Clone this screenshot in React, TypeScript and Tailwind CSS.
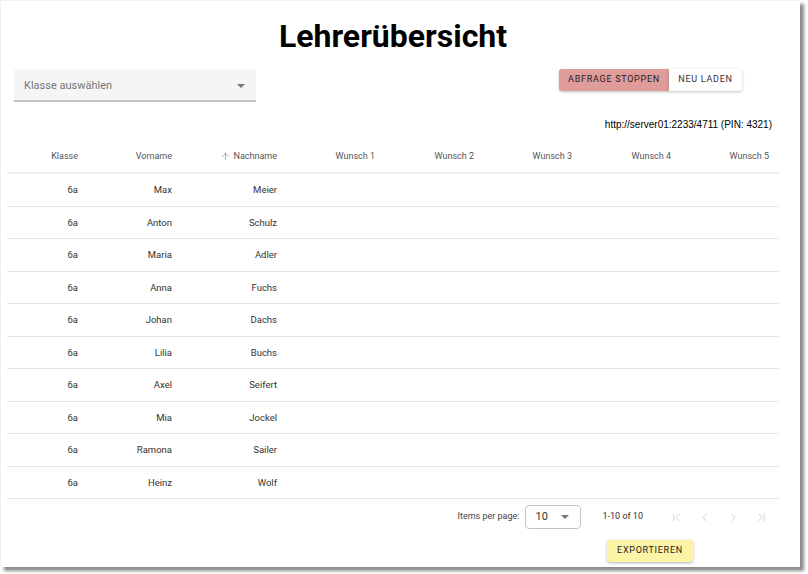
import { ArrowUp, ChevronFirst, ChevronLeft, ChevronRight, ChevronLast } from "lucide-react";

const students = [
  { klasse: "6a", vorname: "Max", nachname: "Meier" },
  { klasse: "6a", vorname: "Anton", nachname: "Schulz" },
  { klasse: "6a", vorname: "Maria", nachname: "Adler" },
  { klasse: "6a", vorname: "Anna", nachname: "Fuchs" },
  { klasse: "6a", vorname: "Johan", nachname: "Dachs" },
  { klasse: "6a", vorname: "Lilia", nachname: "Buchs" },
  { klasse: "6a", vorname: "Axel", nachname: "Seifert" },
  { klasse: "6a", vorname: "Mia", nachname: "Jockel" },
  { klasse: "6a", vorname: "Ramona", nachname: "Sailer" },
  { klasse: "6a", vorname: "Heinz", nachname: "Wolf" },
];

const cols = "grid grid-cols-[81px_94px_105px_98px_99px_98px_99px_98px]";

function Caret() {
  return (
    <svg width="8" height="4" viewBox="0 0 8 4" className="fill-[#757575]">
      <path d="M0 0h8L4 4z" />
    </svg>
  );
}

export default function App() {
  return (
    <div className="w-[808px] h-[574px] bg-white font-['Roboto',sans-serif]">
      <div className="w-[800px] h-[567px] bg-white shadow-[4px_4px_3px_rgba(0,0,0,0.45)] border-t border-l border-[#f0f0f0] flex flex-col">
        <h1 className="pt-[13px] pr-[15px] text-center text-[32px] leading-[44px] font-bold text-black">Lehrerübersicht</h1>

        <div className="mt-[11px] flex items-start">
          <div className="ml-[13px] w-[242px] h-[33px] bg-[#f5f5f5] rounded-t-[3px] border-b-2 border-[#c4c4c4] flex items-center justify-between pl-[10px] pr-[11px] pt-[3px]">
            <span className="text-[11px] text-[#757575]">Klasse auswählen</span>
            <Caret />
          </div>
          <div className="ml-auto mr-[58px] flex">
            <button className="h-[22px] w-[110px] rounded-l-[3px] bg-[#e09b9b] text-[9px] font-normal tracking-[0.08em] text-[#2a1c1c] shadow-[0_1px_3px_rgba(0,0,0,0.25)]">
              ABFRAGE STOPPEN
            </button>
            <button className="h-[22px] w-[73px] rounded-r-[3px] bg-white text-[9px] font-normal tracking-[0.08em] text-[#333] shadow-[0_1px_3px_rgba(0,0,0,0.25)]">
              NEU LADEN
            </button>
          </div>
        </div>

        <div className="mt-[15px] pr-[28px] text-right text-[10px] leading-[16px] text-black font-['Liberation_Sans',sans-serif]">
          http://server01:2233/4711 (PIN: 4321)
        </div>

        <div className="mx-[6px] mt-[8px] w-[772px]">
          <div className={`${cols} h-[33px] border-b-2 border-[#efefef] text-[9px] text-[#555] items-center`}>
            <div className="text-right pr-[10px]">Klasse</div>
            <div className="text-right pr-[10px]">Vorname</div>
            <div className="flex items-center justify-end gap-[2px] pr-[10px]">
              <ArrowUp size={11} strokeWidth={1.5} className="text-[#888]" />
              <span>Nachname</span>
            </div>
            <div className="text-right pr-[10px]">Wunsch 1</div>
            <div className="text-right pr-[10px]">Wunsch 2</div>
            <div className="text-right pr-[10px]">Wunsch 3</div>
            <div className="text-right pr-[10px]">Wunsch 4</div>
            <div className="text-right pr-[10px]">Wunsch 5</div>
          </div>
          {students.map((s) => (
            <div key={s.vorname} className={`${cols} h-[32.5px] border-b border-[#e5e5e5] text-[9.5px] text-[#333] items-center pt-[1px]`}>
              <div className="text-right pr-[10px]">{s.klasse}</div>
              <div className="text-right pr-[10px]">{s.vorname}</div>
              <div className="text-right pr-[10px]">{s.nachname}</div>
              <div />
              <div />
              <div />
              <div />
              <div />
            </div>
          ))}

          <div className="h-[36px] flex items-center justify-end pr-[3px] text-[9px] text-[#444]">
            <span>Items per page:</span>
            <div className="ml-[6px] w-[56px] h-[24px] border border-[#c4c4c4] rounded-[4px] flex items-center justify-between pl-[9px] pr-[11px]">
              <span className="text-[11px] text-[#333]">10</span>
              <Caret />
            </div>
            <span className="ml-[21px] mr-[19px] text-[#333]">1-10 of 10</span>
            <div className="flex text-[#c4c4c4]">
              <span className="w-[28.5px] flex justify-center"><ChevronFirst size={13} strokeWidth={1.5} /></span>
              <span className="w-[28.5px] flex justify-center"><ChevronLeft size={13} strokeWidth={1.5} /></span>
              <span className="w-[28.5px] flex justify-center"><ChevronRight size={13} strokeWidth={1.5} /></span>
              <span className="w-[28.5px] flex justify-center"><ChevronLast size={13} strokeWidth={1.5} /></span>
            </div>
          </div>
        </div>

        <div className="mt-[5px] flex justify-end pr-[107px]">
          <button className="h-[22px] w-[86px] rounded-[3px] bg-[#fcf3a6] text-[9px] font-normal tracking-[0.08em] text-[#222] shadow-[0_1px_3px_rgba(0,0,0,0.3)]">
            EXPORTIEREN
          </button>
        </div>
      </div>
    </div>
  );
}
